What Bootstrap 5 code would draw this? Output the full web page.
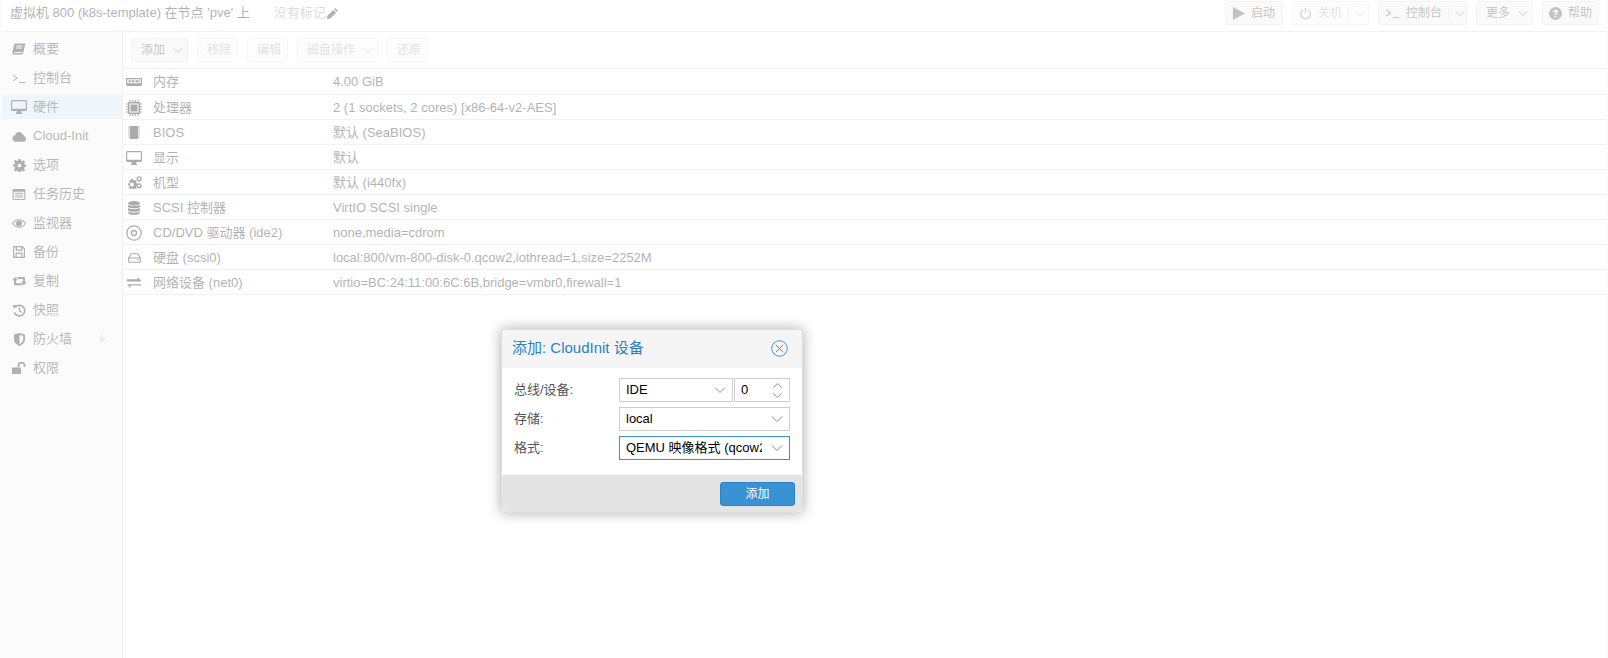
<!DOCTYPE html>
<html lang="zh-CN">
<head>
<meta charset="utf-8">
<title>虚拟机 800</title>
<link rel="stylesheet" href="https://cdn.jsdelivr.net/npm/bootstrap@5.3.0/dist/css/bootstrap.min.css">
<style>
html,body{height:658px;overflow:hidden}
body{font:13px/16px "Liberation Sans","Noto Sans CJK SC",sans-serif;color:#222;background:#f0f0f0;padding:0 1px 0 2px;position:relative}
svg{display:block;flex:none}
.page-wrap{height:658px;background:#fff}
.title-bar{height:32px;border-bottom:1px solid #d6d6d6;padding:1px 8px 0 8px;align-items:flex-start}
.title-left{height:24px}
.vm-title{margin-right:24px;color:#222}
.no-tags{color:#999}
.pencil-mark{color:#222}
.tool-btn{font-size:12px;line-height:16px;height:24px;padding:0 0 0 9px;color:#555;background:#f0f0f0;border:1px solid #dcdcdc;border-radius:3px;display:flex;align-items:center;gap:6px;white-space:nowrap}
.tool-btn.faded{color:#aaa;background:#fafafa;border-color:#e4e4e4}
.tool-btn.has-icon{padding-left:6px}
.tool-btn svg{color:#555}
.tool-btn.faded svg{color:#999}
.btn-chev{margin-left:2px}
.top-group{gap:9px}
.split-sep{width:1px;height:16px;background:#dcdcdc}
.side-nav{width:121px;flex:none;background:#f2f2f2;border-right:1px solid #d6d6d6;padding-top:5px;height:626px}
.side-item{height:24px;margin-bottom:5px;display:flex;align-items:center;padding:0 0 0 9px;color:#333;position:relative}
.side-ico{width:16px;flex:none;display:flex;justify-content:center;margin-right:6px;color:#222}
.side-item.active{background:#cfe4f5}
.more-arrow{position:absolute;left:98px;top:7px;width:0;height:0;border:5px solid transparent;border-left:6px solid #c8c8c8;border-right:0}
.main-pane{flex:1;min-width:0}
.tool-row{height:37px;border-bottom:1px solid #d6d6d6;padding:6px 8px 0 8px;gap:9px}
.hw-row{height:25px;border-bottom:1px solid #d6d6d6;display:flex;align-items:center;color:#222;padding-top:1px}
.hw-row.first{height:26px}
.hw-icon{width:22px;margin-right:8px;flex:none;display:flex;justify-content:center;color:#111}
.hw-name{width:180px;flex:none}
.hw-val{color:#222}
.page-mask{position:absolute;inset:0;background:rgba(255,255,255,.65);z-index:5}
.dlg{position:absolute;left:501px;top:329px;width:302px;height:184px;z-index:6;background:#fff;border:1px solid #ddd;border-radius:4px;box-shadow:0 0 14px rgba(0,0,0,.32);overflow:hidden;color:#000}
.dlg-head{height:38px;background:#f5f5f5;display:flex;align-items:center;justify-content:space-between;padding:0 14px 2px 10px;font-size:15px;color:#2a82c5;flex:none;border:0;border-radius:0}
.dlg-body{height:107px;padding:10px 12px 0 12px;flex:none}
.fld-row{height:24px;margin-bottom:5px;display:flex;align-items:center}
.fld-label{width:105px;flex:none;color:#555}
.fld{flex:1;min-width:0;height:24px;border:1px solid #cfcfcf;border-radius:0;padding:0 6px;display:flex;align-items:center;justify-content:space-between;font-size:13px;line-height:16px;color:#000;background:#fff}
.fld.on{border-color:#3892d4}
.fld-text{white-space:nowrap;overflow:hidden;width:136px}
.spin{flex:none;width:56px;margin-left:1px}
.dlg-foot{height:37px;background:#e4e4e4;display:flex;justify-content:flex-end;align-items:flex-start;padding:7px 7px 0 0;flex:none;border:0;border-radius:0}
.add-btn{width:75px;height:24px;padding:0;font-size:12px;line-height:16px;color:#fff;background:#3892d4;border:1px solid #2a82c5;border-radius:3px}
.ico-muted{color:#888}
.ico-close{color:#3892d4}
.svg-defs{position:absolute}
</style>
</head>
<body>
<svg width="0" height="0" class="svg-defs">
<defs>
<symbol id="i-chev" viewBox="0 0 12 8"><path d="M1 1.500l5 5 5-5" fill="none" stroke="currentColor" stroke-width="1"/></symbol>
<symbol id="i-pencil" viewBox="0 0 14 14"><path d="M10 1l3 3-1.300 1.300-3-3zM7.900 3.100l3 3L4.500 12.500 1 13l.5-3.500z" fill="currentColor"/></symbol>
<symbol id="i-play" viewBox="0 0 14 14"><path d="M1 0l13 7-13 7z" fill="currentColor"/></symbol>
<symbol id="i-power" viewBox="0 0 14 14"><path d="M4 3.200a5.200 5.200 0 1 0 6 0" fill="none" stroke="currentColor" stroke-width="1.700"/><path d="M7 1v6" stroke="currentColor" stroke-width="1.700"/></symbol>
<symbol id="i-term" viewBox="0 0 16 12"><path d="M1 2l5 3.500-5 3.500" fill="none" stroke="currentColor" stroke-width="1.100"/><path d="M8 10.500h7" stroke="currentColor" stroke-width="1.100"/></symbol>
<symbol id="i-help" viewBox="0 0 14 14"><path fill-rule="evenodd" d="M7 0a7 7 0 1 1 0 14A7 7 0 0 1 7 0zM4.400 5.200l1.600.7c.2-.6.500-.9 1-.9s.8.2.8.6c0 .9-2 1-2 2.800h1.800c0-1 2.100-1.200 2.100-3.300C9.700 3.700 8.500 3 7 3 5.700 3 4.900 3.900 4.400 5.200zM6 9.500v1.600h1.800V9.500z" fill="currentColor"/></symbol>
<symbol id="i-book" viewBox="0 0 14 12"><path d="M3.500.5H13.500L11 10.500c-.2.700-.7 1-1.400 1H2c-1.200 0-2-.8-1.600-2.200L2 2c.2-.9.800-1.500 1.500-1.500z" fill="currentColor"/><path d="M4.500 3h6M4 5h6" stroke="#f2f2f2"/><path d="M2.200 9.500h8" stroke="#f2f2f2"/></symbol>
<symbol id="i-desk" viewBox="0 0 16 14"><path fill-rule="evenodd" d="M1.500 0h13c.8 0 1.500.6 1.500 1.400v8.200c0 .8-.7 1.400-1.500 1.400H10c0 1 .5 1.500 1 2v1H5v-1c.5-.5 1-1 1-2H1.500C.7 11 0 10.400 0 9.600V1.400C0 .6.700 0 1.500 0zM1.200 1.300v7.400h13.600V1.300z" fill="currentColor"/></symbol>
<symbol id="i-cloud" viewBox="0 0 16 11"><path d="M4 11a3.500 3.500 0 0 1-.8-6.900A4.500 4.500 0 0 1 11.500 3a3 3 0 0 1 1.500 2.300 3 3 0 0 1 0 5.700z" fill="currentColor"/></symbol>
<symbol id="i-gear" viewBox="0 0 14 14"><path fill-rule="evenodd" d="M5.800 0h2.400l.3 2 1.200.5 1.700-1.200 1.700 1.700-1.200 1.700.5 1.200 1.600.3v2.400l-1.600.3-.5 1.200 1.200 1.700-1.700 1.700-1.700-1.200-1.200.5-.3 1.600H5.800l-.3-1.600-1.200-.5-1.700 1.200L.9 11.300l1.200-1.700-.5-1.200L0 8.200V5.800l1.600-.3.5-1.200L.9 2.600l1.700-1.700 1.700 1.200 1.200-.5zM7 5a2 2 0 1 0 0 4 2 2 0 0 0 0-4z" fill="currentColor"/></symbol>
<symbol id="i-list" viewBox="0 0 14 12"><path fill-rule="evenodd" d="M1 0h12c.6 0 1 .4 1 1v10c0 .6-.4 1-1 1H1c-.6 0-1-.4-1-1V1c0-.6.400-1 1-1zm.2 3v7.800h11.600V3zM2.500 4.200h9v1h-9zm0 2h9v1h-9zm0 2h9v1h-9z" fill="currentColor"/></symbol>
<symbol id="i-eye" viewBox="0 0 16 10"><path d="M.6 5C2.300 2.400 4.800.7 8 .7s5.700 1.700 7.400 4.300C13.700 7.600 11.200 9.300 8 9.300S2.300 7.600.6 5z" fill="none" stroke="currentColor" stroke-width="1.200"/><circle cx="8" cy="5" r="3.400" fill="currentColor"/></symbol>
<symbol id="i-save" viewBox="0 0 12 12"><path fill-rule="evenodd" d="M1 0h8.500L12 2.500V11c0 .6-.4 1-1 1H1c-.6 0-1-.4-1-1V1c0-.6.400-1 1-1zm.2 1.200v9.600h1.300V6.500h7v4.300h1.300V3L9.300 1.500v3.200H2.700V1.200zm2.500 6.500v3.100h4.600V7.700zM4 1.200v2.300h4V1.200z" fill="currentColor"/></symbol>
<symbol id="i-retweet" viewBox="0 0 16 12"><path d="M3 1l3.200 3.500H4.300V8H10l2 2.200H3c-.6 0-1-.4-1-1V4.500H0zM4.500 1H13c.6 0 1 .4 1 1v4.500h2L12.800 10 9.700 6.500h2V3.200H6.500z" fill="currentColor"/></symbol>
<symbol id="i-hist" viewBox="0 0 14 14"><path d="M2.800 3.200A5.700 5.700 0 1 1 1.500 9" fill="none" stroke="currentColor" stroke-width="1.800"/><path d="M0 1l5 .3L1 5.500z" fill="currentColor"/><path d="M7 3.800v3.700l2.500 1.500" fill="none" stroke="currentColor" stroke-width="1.400"/></symbol>
<symbol id="i-shield" viewBox="0 0 12 14"><path fill-rule="evenodd" d="M0 1.500L6 0l6 1.500V7c0 3.500-3 6-6 7-3-1-6-3.500-6-7zM6 2v10c2-1 4-2.700 4-5V3z" fill="currentColor"/></symbol>
<symbol id="i-unlock" viewBox="0 0 14 12"><path d="M0 5.500h9V12H0z" fill="currentColor"/><path d="M6.500 5.500V3.500a3 3 0 0 1 6 0V5" fill="none" stroke="currentColor" stroke-width="1.800"/></symbol>
<symbol id="i-mem" viewBox="0 0 16 8"><path fill-rule="evenodd" d="M0 0h16v6.500h-.5V8H.5V6.500H0zM1.200 1.200v4.100h13.600V1.200zM2.500 2.300h2.500v2H2.500zm3.500 0h2.500v2H6zm3.500 0H12v2H9.500zm3 0h1.300v2h-1.300z" fill="currentColor"/></symbol>
<symbol id="i-chip" viewBox="0 0 16 16"><path fill-rule="evenodd" d="M3 2h10a1 1 0 0 1 1 1v10a1 1 0 0 1-1 1H3a1 1 0 0 1-1-1V3a1 1 0 0 1 1-1zm.5 1.500v9h9v-9z" fill="currentColor"/><path d="M4.500 4.500h7v7h-7z" fill="currentColor"/><path d="M4 0v2M6.700 0v2M9.300 0v2M12 0v2M4 14v2M6.700 14v2M9.300 14v2M12 14v2M0 4h2M0 6.700h2M0 9.300h2M0 12h2M14 4h2M14 6.700h2M14 9.300h2M14 12h2" stroke="currentColor" stroke-width="1.100"/></symbol>
<symbol id="i-bios" viewBox="0 0 12 13"><path d="M2 0h8v13H2z" fill="currentColor"/><path d="M0 1h2M0 3h2M0 5h2M0 7h2M0 9h2M0 11h2M10 1h2M10 3h2M10 5h2M10 7h2M10 9h2M10 11h2" stroke="currentColor" stroke-width=".7"/></symbol>
<symbol id="i-cogs" viewBox="0 0 16 14"><path fill-rule="evenodd" d="M4 3h2.400l.3 1.400 1 .4 1.200-.8 1.600 1.600-.8 1.200.4 1 1.400.3v2.200l-1.400.3-.4 1 .8 1.200-1 1H3l-1-1 .8-1.200-.4-1L1 10.300V8.100l1.400-.3.400-1L2 5.600 3.600 4l1.200.8zM5.200 7a2.200 2.200 0 1 0 0 4.400 2.200 2.200 0 0 0 0-4.400z" fill="currentColor"/><circle cx="13" cy="3" r="2.100" fill="none" stroke="currentColor" stroke-width="1.500"/><circle cx="13" cy="10.500" r="2" fill="none" stroke="currentColor" stroke-width="1.500"/></symbol>
<symbol id="i-db" viewBox="0 0 12 14"><ellipse cx="6" cy="2.200" rx="6" ry="2.200" fill="currentColor"/><path d="M0 3.800c1 1.400 11 1.400 12 0v2c-1 2-11 2-12 0zM0 7.100c1 1.500 11 1.500 12 0v2.200c-1 2-11 2-12 0zM0 10.500c1 1.500 11 1.500 12 0v1.300C11 14.700 1 14.700 0 11.800z" fill="currentColor"/></symbol>
<symbol id="i-cd" viewBox="0 0 16 16"><circle cx="8" cy="8" r="7.200" fill="none" stroke="currentColor" stroke-width="1.200"/><circle cx="8" cy="8" r="2.500" fill="none" stroke="currentColor" stroke-width="1.300"/></symbol>
<symbol id="i-hdd" viewBox="0 0 13 10"><path d="M3 .7h7L12.300 5v3.300a1 1 0 0 1-1 1H1.700a1 1 0 0 1-1-1V5zM.8 5h11.400" fill="none" stroke="currentColor" stroke-width="1.100"/><path d="M9 7h1M10.500 7h.8" stroke="currentColor"/></symbol>
<symbol id="i-swap" viewBox="0 0 14 11"><path d="M0 2.300h10.500V0L14 3.400l-3.500 0H0zM14 7.300H3.500L0 7.300l3.500 3.700V8.500H14zM0 3.400h14v1.200H0z" fill="currentColor"/></symbol>
<symbol id="i-close" viewBox="0 0 16 16"><circle cx="8" cy="8" r="7.300" fill="none" stroke="currentColor" stroke-width=".9"/><path d="M4.500 4.500l7 7M11.500 4.500l-7 7" stroke="currentColor" stroke-width=".9"/></symbol>
<symbol id="i-spin" viewBox="0 0 12 18"><path d="M1.500 6l4.500-4.500L10.500 6M1.500 12l4.500 4.500 4.500-4.500" fill="none" stroke="currentColor" stroke-width="1"/></symbol>
</defs>
</svg>

<div class="page-wrap d-flex flex-column">
  <header class="title-bar d-flex justify-content-between">
    <div class="title-left d-flex align-items-center">
      <span class="vm-title">虚拟机 800 (k8s-template) 在节点 'pve' 上</span>
      <span class="no-tags">没有标记</span>
      <svg width="13" height="13" class="pencil-mark"><use href="#i-pencil"/></svg>
    </div>
    <div class="d-flex top-group">
      <button type="button" class="btn tool-btn has-icon" style="width:58px"><svg width="13" height="13"><use href="#i-play"/></svg>启动</button>
      <button type="button" class="btn tool-btn faded has-icon" style="width:77px"><svg width="13" height="13"><use href="#i-power"/></svg>关机<span class="split-sep"></span><svg width="10" height="7"><use href="#i-chev"/></svg></button>
      <button type="button" class="btn tool-btn has-icon" style="width:89px"><svg width="15" height="11"><use href="#i-term"/></svg>控制台<span class="split-sep"></span><svg width="10" height="7"><use href="#i-chev"/></svg></button>
      <button type="button" class="btn tool-btn" style="width:57px">更多<svg width="10" height="7" class="btn-chev"><use href="#i-chev"/></svg></button>
      <button type="button" class="btn tool-btn has-icon" style="width:57px"><svg width="13" height="13"><use href="#i-help"/></svg>帮助</button>
    </div>
  </header>
  <div class="d-flex flex-grow-1">
    <nav class="side-nav">
      <div class="side-item"><span class="side-ico"><svg width="14" height="12"><use href="#i-book"/></svg></span>概要</div>
      <div class="side-item"><span class="side-ico"><svg width="14" height="11"><use href="#i-term"/></svg></span>控制台</div>
      <div class="side-item active"><span class="side-ico"><svg width="16" height="14"><use href="#i-desk"/></svg></span>硬件</div>
      <div class="side-item"><span class="side-ico"><svg width="15" height="11"><use href="#i-cloud"/></svg></span>Cloud-Init</div>
      <div class="side-item"><span class="side-ico"><svg width="13" height="13"><use href="#i-gear"/></svg></span>选项</div>
      <div class="side-item"><span class="side-ico"><svg width="14" height="11"><use href="#i-list"/></svg></span>任务历史</div>
      <div class="side-item"><span class="side-ico"><svg width="14" height="9"><use href="#i-eye"/></svg></span>监视器</div>
      <div class="side-item"><span class="side-ico"><svg width="12" height="12"><use href="#i-save"/></svg></span>备份</div>
      <div class="side-item"><span class="side-ico"><svg width="15" height="11"><use href="#i-retweet"/></svg></span>复制</div>
      <div class="side-item"><span class="side-ico"><svg width="13" height="13"><use href="#i-hist"/></svg></span>快照</div>
      <div class="side-item"><span class="side-ico"><svg width="11" height="13"><use href="#i-shield"/></svg></span>防火墙<span class="more-arrow"></span></div>
      <div class="side-item"><span class="side-ico"><svg width="14" height="12"><use href="#i-unlock"/></svg></span>权限</div>
    </nav>
    <main class="main-pane">
      <div class="tool-row d-flex">
        <button type="button" class="btn tool-btn" style="width:57px">添加<svg width="10" height="7" class="btn-chev"><use href="#i-chev"/></svg></button>
        <button type="button" class="btn tool-btn faded" style="width:41px">移除</button>
        <button type="button" class="btn tool-btn faded" style="width:41px">编辑</button>
        <button type="button" class="btn tool-btn faded" style="width:81px">磁盘操作<svg width="10" height="7" class="btn-chev"><use href="#i-chev"/></svg></button>
        <button type="button" class="btn tool-btn faded" style="width:41px">还原</button>
      </div>
      <div class="hw-row first"><span class="hw-icon"><svg width="16" height="8"><use href="#i-mem"/></svg></span><span class="hw-name">内存</span><span class="hw-val">4.00 GiB</span></div>
      <div class="hw-row"><span class="hw-icon"><svg width="16" height="16"><use href="#i-chip"/></svg></span><span class="hw-name">处理器</span><span class="hw-val">2 (1 sockets, 2 cores) [x86-64-v2-AES]</span></div>
      <div class="hw-row"><span class="hw-icon"><svg width="12" height="13"><use href="#i-bios"/></svg></span><span class="hw-name">BIOS</span><span class="hw-val">默认 (SeaBIOS)</span></div>
      <div class="hw-row"><span class="hw-icon"><svg width="16" height="14"><use href="#i-desk"/></svg></span><span class="hw-name">显示</span><span class="hw-val">默认</span></div>
      <div class="hw-row"><span class="hw-icon"><svg width="15" height="13"><use href="#i-cogs"/></svg></span><span class="hw-name">机型</span><span class="hw-val">默认 (i440fx)</span></div>
      <div class="hw-row"><span class="hw-icon"><svg width="12" height="14"><use href="#i-db"/></svg></span><span class="hw-name">SCSI 控制器</span><span class="hw-val">VirtIO SCSI single</span></div>
      <div class="hw-row"><span class="hw-icon"><svg width="16" height="16"><use href="#i-cd"/></svg></span><span class="hw-name">CD/DVD 驱动器 (ide2)</span><span class="hw-val">none,media=cdrom</span></div>
      <div class="hw-row"><span class="hw-icon"><svg width="13" height="10"><use href="#i-hdd"/></svg></span><span class="hw-name">硬盘 (scsi0)</span><span class="hw-val">local:800/vm-800-disk-0.qcow2,iothread=1,size=2252M</span></div>
      <div class="hw-row"><span class="hw-icon"><svg width="14" height="11"><use href="#i-swap"/></svg></span><span class="hw-name">网络设备 (net0)</span><span class="hw-val">virtio=BC:24:11:00:6C:6B,bridge=vmbr0,firewall=1</span></div>
    </main>
  </div>
</div>

<div class="page-mask"></div>

<section class="dlg card">
  <div class="card-header dlg-head"><span>添加: CloudInit 设备</span><svg width="17" height="17" class="ico-close"><use href="#i-close"/></svg></div>
  <div class="card-body dlg-body">
    <div class="fld-row"><span class="fld-label">总线/设备:</span><div class="fld"><span>IDE</span><svg width="12" height="8" class="ico-muted"><use href="#i-chev"/></svg></div><div class="fld spin"><span>0</span><svg width="11" height="17" class="ico-muted"><use href="#i-spin"/></svg></div></div>
    <div class="fld-row"><span class="fld-label">存储:</span><div class="fld"><span>local</span><svg width="12" height="8" class="ico-muted"><use href="#i-chev"/></svg></div></div>
    <div class="fld-row"><span class="fld-label">格式:</span><div class="fld on"><span class="fld-text">QEMU 映像格式 (qcow2)</span><svg width="12" height="8" class="ico-muted"><use href="#i-chev"/></svg></div></div>
  </div>
  <div class="card-footer dlg-foot"><button type="button" class="btn add-btn">添加</button></div>
</section>
<script src="https://cdn.jsdelivr.net/npm/bootstrap@5.3.0/dist/js/bootstrap.bundle.min.js"></script>
</body>
</html>
